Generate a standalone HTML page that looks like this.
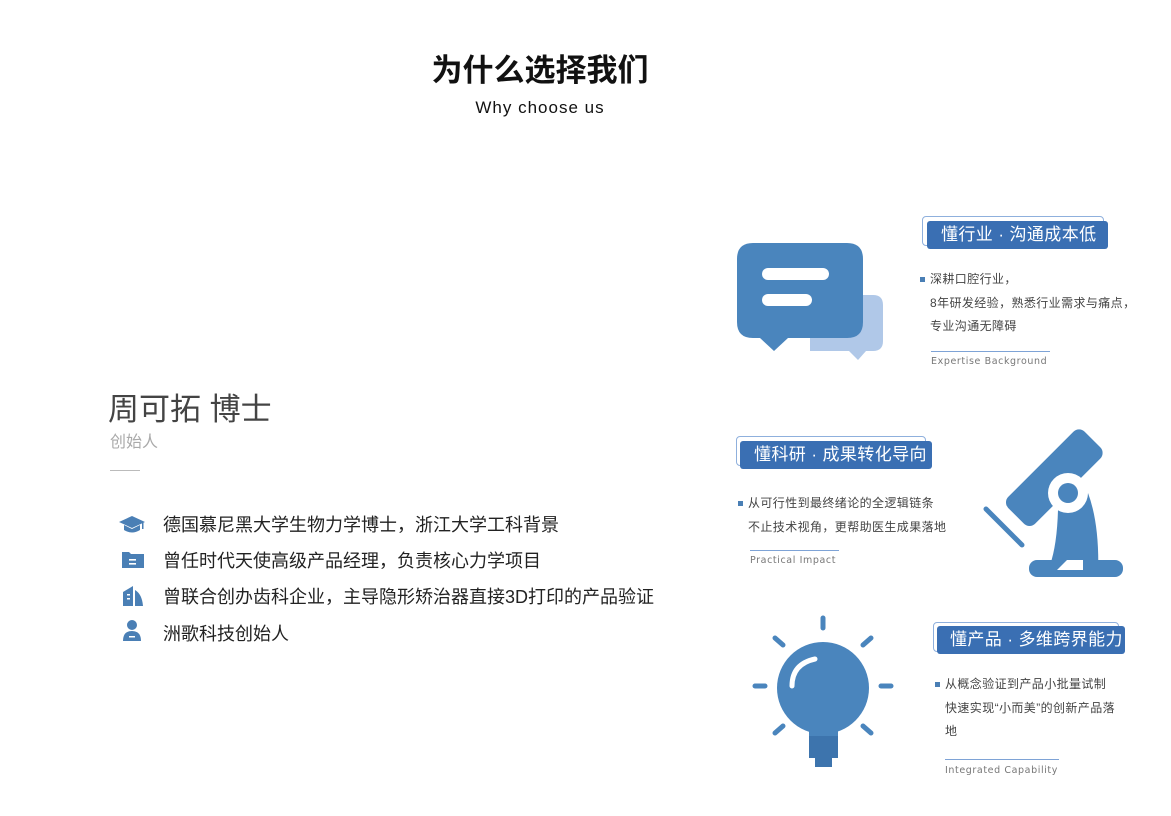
<!DOCTYPE html>
<html><head><meta charset="utf-8"><style>
body{margin:0;width:1171px;height:816px;background:#fff;position:relative;overflow:hidden;font-family:"Liberation Sans","Noto Sans CJK SC",sans-serif}
.a{position:absolute;white-space:nowrap}
.tag{position:absolute;background:#3a6fb3;color:#fff;font-size:17px;line-height:28px;border-radius:3px;box-sizing:border-box;letter-spacing:0.4px}
.out{position:absolute;border:1px solid #8fb0dd;border-radius:4px;box-sizing:border-box}
.bt{position:absolute;font-size:12px;color:#444;line-height:23.5px;white-space:nowrap;letter-spacing:0.4px}
.bt:before{content:"";position:absolute;left:-10px;top:9px;width:5px;height:5px;background:#4a7fb5}
.ln{position:absolute;height:1px;background:#7ea3d6}
.en{position:absolute;color:#777;letter-spacing:0.6px;font-family:"DejaVu Sans",sans-serif;font-size:9.5px}
.li{position:absolute;left:163px;font-size:18px;color:#222}
</style></head><body>
<div class="a" style="left:0;width:1080px;text-align:center;top:45px;font-size:31px;font-weight:bold;color:#111">为什么选择我们</div>
<div class="a" style="left:0;width:1080px;text-align:center;top:98px;font-size:17px;color:#111;letter-spacing:1px">Why choose us</div>

<div class="a" style="left:108px;top:384px;font-size:31px;color:#444">周可拓 博士</div>
<div class="a" style="left:110px;top:428px;font-size:16px;color:#aaa">创始人</div>
<div class="a" style="left:110px;top:470px;width:30px;height:1px;background:#bbb"></div>

<svg class="a" style="left:118px;top:510px" width="30" height="140" viewBox="0 0 30 140" fill="#4a7fb5">
<path d="M1 12 L14 6 L27 12 L14 18 Z"/><path d="M6 15 V20 Q14 25 22 20 V15 L14 19 Z"/><rect x="24" y="12" width="1.5" height="7"/>
<path d="M4 42 H11 L13 44 H26 V58 H4 Z"/><rect x="11" y="49" width="7" height="1.6" fill="#fff"/><rect x="11" y="53" width="7" height="1.6" fill="#fff"/>
<path d="M5 82 L15 76 V96 H5 Z"/><path d="M17 80 Q24 84 25 96 H17 Z"/><rect x="9" y="84" width="3" height="1.5" fill="#fff"/><rect x="9" y="88" width="3" height="1.5" fill="#fff"/>
<circle cx="14" cy="115" r="5"/><path d="M5 131 Q5 121 14 121 Q23 121 23 131 Z"/><rect x="11" y="126" width="6" height="1.5" fill="#fff"/>
</svg>
<div class="li" style="top:511px">德国慕尼黑大学生物力学博士，浙江大学工科背景</div>
<div class="li" style="top:547px">曾任时代天使高级产品经理，负责核心力学项目</div>
<div class="li" style="top:583px">曾联合创办齿科企业，主导隐形矫治器直接3D打印的产品验证</div>
<div class="li" style="top:620px">洲歌科技创始人</div>

<svg class="a" style="left:730px;top:235px" width="160" height="130">
<path d="M80 60 H143 Q153 60 153 70 V106 Q153 116 143 116 H136 L128 125 L119 116 H80 Z" fill="#b0c8e8"/>
<path d="M23 8 H117 Q133 8 133 24 V87 Q133 103 117 103 H58 L44 116 L30 103 H23 Q7 103 7 87 V24 Q7 8 23 8 Z" fill="#4a85bd"/>
<rect x="32" y="33" width="67" height="12" rx="6" fill="#fff"/>
<rect x="32" y="59" width="50" height="12" rx="6" fill="#fff"/>
</svg>
<div class="out" style="left:922px;top:216px;width:182px;height:30px"></div>
<div class="tag" style="left:927px;top:221px;width:181px;padding-left:14px">懂行业 · 沟通成本低</div>
<div class="bt" style="left:930px;top:268px">深耕口腔行业，<br>8年研发经验，熟悉行业需求与痛点，<br>专业沟通无障碍</div>
<div class="ln" style="left:931px;top:351px;width:119px"></div>
<div class="en" style="left:931px;top:356px">Expertise Background</div>

<div class="out" style="left:736px;top:436px;width:190px;height:30px"></div>
<div class="tag" style="left:740px;top:441px;width:192px;padding-left:14px">懂科研 · 成果转化导向</div>
<div class="bt" style="left:748px;top:492px">从可行性到最终绪论的全逻辑链条<br>不止技术视角，更帮助医生成果落地</div>
<div class="ln" style="left:750px;top:550px;width:89px"></div>
<div class="en" style="left:750px;top:555px">Practical Impact</div>
<svg class="a" style="left:975px;top:415px" width="160" height="170">
<rect x="25" y="43" width="108" height="38" rx="8" fill="#4a85bd" transform="rotate(-45 80 62)"/>
<circle cx="29" cy="94" r="4" fill="#fff"/>
<path d="M83 95 Q82 130 75 150 L70 162 H123 Q125 110 113 78 Z" fill="#4a85bd"/>
<circle cx="93" cy="78" r="20" fill="#fff"/>
<circle cx="93" cy="78" r="10" fill="#4a85bd"/>
<rect x="54" y="145" width="94" height="17" rx="8" fill="#4a85bd"/>
<path d="M92 145 L82 155 H108 V145 Z" fill="#fff"/>
<line x1="11" y1="94" x2="47" y2="130" stroke="#4a85bd" stroke-width="5" stroke-linecap="round"/>
</svg>

<svg class="a" style="left:745px;top:610px" width="160" height="165">
<g stroke="#4a85bd" stroke-width="5" stroke-linecap="round">
<line x1="78" y1="8" x2="78" y2="18"/><line x1="10" y1="76" x2="20" y2="76"/><line x1="136" y1="76" x2="146" y2="76"/>
<line x1="30" y1="28" x2="38" y2="35"/><line x1="126" y1="28" x2="118" y2="35"/>
<line x1="30" y1="123" x2="38" y2="116"/><line x1="126" y1="123" x2="118" y2="116"/>
</g>
<circle cx="78" cy="78" r="46" fill="#4a85bd"/>
<rect x="64" y="112" width="29" height="36" fill="#4a85bd"/>
<rect x="64" y="126" width="29" height="22" fill="#3d74ad"/>
<rect x="70" y="147" width="17" height="10" fill="#3d74ad"/>
<path d="M47 76 Q47 54 70 49" stroke="#fff" stroke-width="5" fill="none" stroke-linecap="round"/>
</svg>
<div class="out" style="left:933px;top:622px;width:186px;height:30px"></div>
<div class="tag" style="left:937px;top:626px;width:188px;padding-left:13px">懂产品 · 多维跨界能力</div>
<div class="bt" style="left:945px;top:673px">从概念验证到产品小批量试制<br>快速实现“小而美”的创新产品落<br>地</div>
<div class="ln" style="left:945px;top:759px;width:114px"></div>
<div class="en" style="left:945px;top:765px">Integrated Capability</div>
</body></html>
